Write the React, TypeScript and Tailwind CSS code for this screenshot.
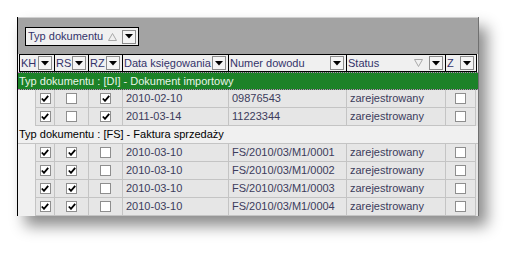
import React from 'react';

interface Row {
    kh: boolean;
    rs: boolean;
    rz: boolean;
    data: string;
    numer: string;
    status: string;
    z: boolean;
}

const groups: { label: string; active: boolean; rows: Row[] }[] = [
    {
        label: 'Typ dokumentu : [DI] - Dokument importowy',
        active: true,
        rows: [
            {kh: true, rs: false, rz: true, data: '2010-02-10', numer: '09876543', status: 'zarejestrowany', z: false},
            {kh: true, rs: false, rz: true, data: '2011-03-14', numer: '11223344', status: 'zarejestrowany', z: false},
        ],
    },
    {
        label: 'Typ dokumentu : [FS] - Faktura sprzedaży',
        active: false,
        rows: [
            {kh: true, rs: true, rz: false, data: '2010-03-10', numer: 'FS/2010/03/M1/0001', status: 'zarejestrowany', z: false},
            {kh: true, rs: true, rz: false, data: '2010-03-10', numer: 'FS/2010/03/M1/0002', status: 'zarejestrowany', z: false},
            {kh: true, rs: true, rz: false, data: '2010-03-10', numer: 'FS/2010/03/M1/0003', status: 'zarejestrowany', z: false},
            {kh: true, rs: true, rz: false, data: '2010-03-10', numer: 'FS/2010/03/M1/0004', status: 'zarejestrowany', z: false},
        ],
    },
];

const DropBtn = () => (
    <div className="w-[14px] h-[14px] border border-[#8c8c8c] bg-[#f4f4f4] flex items-center justify-center shrink-0">
        <svg width="8" height="5" viewBox="0 0 8 5">
            <polygon points="0,0 8,0 4,4.5" fill="#000"/>
        </svg>
    </div>
);

const SortTri = ({up}: { up: boolean }) => (
    <svg width="9" height="8" viewBox="0 0 9 8" className="shrink-0">
        <polygon
            points={up ? '4.5,0.5 8.5,7.5 0.5,7.5' : '0.5,0.5 8.5,0.5 4.5,7.5'}
            fill="none"
            stroke="#a8a8a8"
        />
    </svg>
);

const Check = ({on}: { on: boolean }) => (
    <div className="w-[11px] h-[11px] border border-[#8e8e8e] bg-white flex items-center justify-center">
        {on && (
            <svg width="8" height="7" viewBox="0 0 8 7">
                <polyline points="0.8,3.5 3,5.8 7.2,0.8" fill="none" stroke="#000" strokeWidth="1.8"/>
            </svg>
        )}
    </div>
);

const HeadCell = ({label, sort}: { label: string; sort?: boolean }) => (
    <div className="h-[18px] border border-black -ml-px first:ml-0 bg-[#f0f0f0] flex items-center pl-px pr-[2px] text-[#33336a] whitespace-nowrap">
        <span className="flex-1">{label}</span>
        {sort && <span className="mr-[6px] flex"><SortTri up={false}/></span>}
        <DropBtn/>
    </div>
);

const BoxCell = ({on}: { on: boolean }) => (
    <div className="border-r border-b border-[#c4c4c4] flex items-center justify-center">
        <Check on={on}/>
    </div>
);

const TextCell = ({text}: { text: string }) => (
    <div className="border-r border-b border-[#c4c4c4] pl-[3px] flex items-center whitespace-nowrap overflow-hidden">{text}</div>
);

const App = () => {
    return (
        <div
            className="w-[527px] h-[265px] bg-white pl-[17px] pt-[17px] text-[11px] leading-none"
            style={{fontFamily: '"Liberation Sans", Arial, sans-serif'}}
        >
            <div className="w-[462px] h-[199px] bg-[#f0f0f0] border-l border-black border-r border-r-[#707070] shadow-[8px_10px_14px_rgba(0,0,0,0.45)] flex flex-col">
                {/* group-by panel */}
                <div className="h-[37px] bg-[#a3a3a3] border-t border-[#cfcfcf] pl-[7px] pt-[9px]">
                    <div className="w-[114px] h-[19px] border border-black bg-[#f0f0f0] flex items-center pl-[2px] pr-[2px] text-[#33336a] whitespace-nowrap">
                        <span className="flex-1">Typ dokumentu</span>
                        <span className="mr-[5px] flex"><SortTri up={true}/></span>
                        <DropBtn/>
                    </div>
                </div>

                {/* column headers */}
                <div
                    className="grid h-[18px] ml-px"
                    style={{gridTemplateColumns: '36px 34px 34px 106px 118px 99px 31px'}}
                >
                    <HeadCell label="KH"/>
                    <HeadCell label="RS"/>
                    <HeadCell label="RZ"/>
                    <HeadCell label="Data księgowania"/>
                    <HeadCell label="Numer dowodu"/>
                    <HeadCell label="Status" sort/>
                    <HeadCell label="Z"/>
                </div>

                {groups.map((g) => (
                    <React.Fragment key={g.label}>
                        {g.active ? (
                            <div className="h-[18px] bg-[#1c8228] text-[#e8f4e8] flex items-center pl-px border-y border-dotted border-[#c080c0] whitespace-nowrap">
                                {g.label}
                            </div>
                        ) : (
                            <div className="h-[18px] bg-[#f0f0f0] text-black flex items-center pl-px border-b border-[#c4c4c4] whitespace-nowrap">
                                {g.label}
                            </div>
                        )}
                        {g.rows.map((r, i) => (
                            <div
                                key={i}
                                className="grid h-[18px] text-[#3c3c5c] bg-[#e6e6e6]"
                                style={{gridTemplateColumns: '18px 19px 34px 34px 106px 118px 99px 30px'}}
                            >
                                <div className="bg-[#f0f0f0] border-r border-[#c4c4c4]"/>
                                <BoxCell on={r.kh}/>
                                <BoxCell on={r.rs}/>
                                <BoxCell on={r.rz}/>
                                <TextCell text={r.data}/>
                                <TextCell text={r.numer}/>
                                <TextCell text={r.status}/>
                                <BoxCell on={r.z}/>
                            </div>
                        ))}
                    </React.Fragment>
                ))}
            </div>
        </div>
    );
};

export default App;
